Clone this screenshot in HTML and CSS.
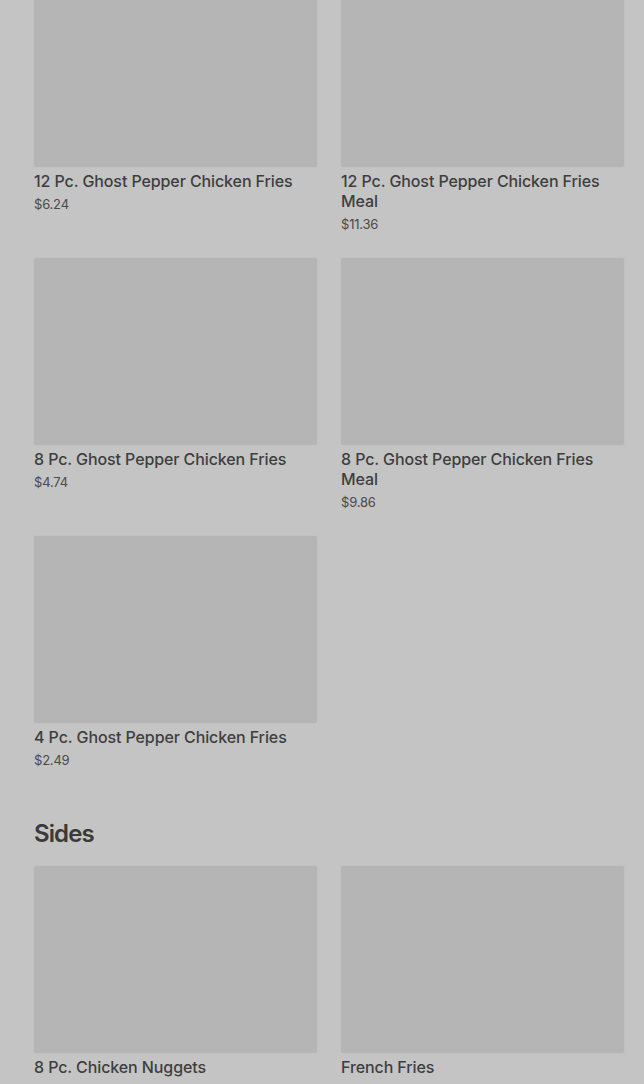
FILE: index.html
```html
<!DOCTYPE html>
<html>
<head>
<meta charset="utf-8">
<link rel="stylesheet" href="styles.css">
</head>
<body>
<main class="page">
  <section class="section first">
    <div class="grid">
      <div class="item"><div class="thumb"></div><div class="name">12 Pc. Ghost Pepper Chicken Fries</div><div class="price">$6.24</div></div>
      <div class="item"><div class="thumb"></div><div class="name">12 Pc. Ghost Pepper Chicken Fries Meal</div><div class="price">$11.36</div></div>
      <div class="item"><div class="thumb"></div><div class="name">8 Pc. Ghost Pepper Chicken Fries</div><div class="price">$4.74</div></div>
      <div class="item"><div class="thumb"></div><div class="name">8 Pc. Ghost Pepper Chicken Fries Meal</div><div class="price">$9.86</div></div>
      <div class="item"><div class="thumb"></div><div class="name">4 Pc. Ghost Pepper Chicken Fries</div><div class="price">$2.49</div></div>
    </div>
  </section>
  <section class="section">
    <h2 class="heading">Sides</h2>
    <div class="grid">
      <div class="item"><div class="thumb"></div><div class="name">8 Pc. Chicken Nuggets</div></div>
      <div class="item"><div class="thumb"></div><div class="name">French Fries</div></div>
    </div>
  </section>
</main>
</body>
</html>
```

FILE: styles.css
```css
html, body {
  margin: 0;
  padding: 0;
  background: #c4c4c4;
  overflow: hidden;
}
body {
  font-family: Inter, Roboto, "Liberation Sans", sans-serif;
  color: #3b3b3b;
}
.page {
  padding: 0 20px 0 34px;
  margin-top: -20px;
}
.section.first {
  margin-bottom: 48px;
}
.grid {
  display: grid;
  grid-template-columns: 283px 283px;
  column-gap: 24px;
  row-gap: 24px;
  align-items: start;
}
.thumb {
  height: 187px;
  background: #b5b5b5;
  border-radius: 2px;
  box-shadow: 0 0 2px rgba(0,0,0,0.06);
}
.name {
  margin-top: 4px;
  font-size: 16px;
  line-height: 20px;
  font-weight: 500;
  color: #3e3e3e;
  letter-spacing: -0.1px;
}
.price {
  margin-top: 3px;
  font-size: 13px;
  line-height: 20px;
  color: #4a4a4a;
  letter-spacing: -0.2px;
}
.heading {
  margin: 0 0 16px;
  font-size: 24px;
  line-height: 32px;
  font-weight: 600;
  color: #3a3a3a;
  letter-spacing: -0.9px;
}
```
